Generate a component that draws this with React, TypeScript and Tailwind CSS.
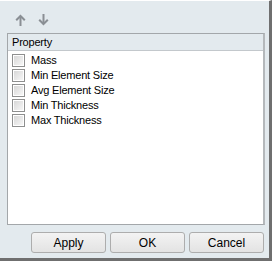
import React from "react";

const rows = ["Mass", "Min Element Size", "Avg Element Size", "Min Thickness", "Max Thickness"];

function ArrowUp() {
  return (
    <svg width="11" height="12" viewBox="0 0 11 12" fill="none" stroke="#8a8f94" strokeWidth="2">
      <path d="M5.5 12V2" />
      <path d="M1.2 6.3L5.5 2L9.8 6.3" />
    </svg>
  );
}

function ArrowDown() {
  return (
    <svg width="11" height="12" viewBox="0 0 11 12" fill="none" stroke="#8a8f94" strokeWidth="2">
      <path d="M5.5 0V10" />
      <path d="M1.2 5.7L5.5 10L9.8 5.7" />
    </svg>
  );
}

function Checkbox() {
  return (
    <div className="w-[13px] h-[13px] border border-[#8e8f8f] bg-white p-[1px] shrink-0">
      <div className="w-full h-full bg-gradient-to-br from-[#d8d8d8] to-[#f6f6f6]" />
    </div>
  );
}

function Button({ label }: { label: string }) {
  return (
    <button className="w-[75px] h-[21px] rounded-[3px] border border-[#adadad] bg-gradient-to-b from-[#f3f3f3] to-[#e3e3e3] text-[12px] text-black leading-none">
      {label}
    </button>
  );
}

export default function App() {
  return (
    <div
      className="w-[272px] h-[261px] bg-[#e3eaee] border-t border-t-white border-r-[3px] border-r-[#6f6f6f] border-b-[3px] border-b-[#6f6f6f] flex flex-col text-black"
      style={{ fontFamily: '"Liberation Sans", Arial, sans-serif' }}
    >
      {/* Toolbar */}
      <div className="h-[32px] flex items-start pt-[13px] pl-[15px] gap-[12px]">
        <ArrowUp />
        <ArrowDown />
      </div>

      {/* Property list */}
      <div className="ml-[7px] mr-[4px] h-[192px] border border-[#a3a7aa] border-r-2 border-r-[#b4b8bb] bg-white flex flex-col">
        <div className="h-[17px] bg-[#e3eaee] border-b border-[#c3c8cc] flex items-center pl-[4px] text-[11px] tracking-[-0.2px]">
          Property
        </div>
        <div className="flex flex-col pt-[2px]">
          {rows.map((r) => (
            <div key={r} className="h-[15px] flex items-center pl-[4px] gap-[6px] text-[11px] tracking-[-0.2px]">
              <Checkbox />
              <span>{r}</span>
            </div>
          ))}
        </div>
      </div>

      {/* Buttons */}
      <div className="flex justify-end gap-[4px] pr-[5px] pt-[7px]">
        <Button label="Apply" />
        <Button label="OK" />
        <Button label="Cancel" />
      </div>
    </div>
  );
}
